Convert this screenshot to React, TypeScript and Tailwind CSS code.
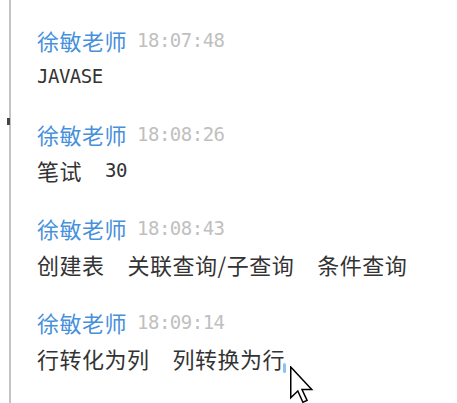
type Part = { text: string; latin?: boolean; gap?: boolean };

type Message = {
  id: number;
  name: string;
  time: string;
  parts: Part[];
};

const messages: Message[] = [
  { id: 1, name: "徐敏老师", time: "18:07:48", parts: [{ text: "JAVASE", latin: true }] },
  {
    id: 2,
    name: "徐敏老师",
    time: "18:08:26",
    parts: [{ text: "笔试" }, { text: "30", latin: true, gap: true }],
  },
  {
    id: 3,
    name: "徐敏老师",
    time: "18:08:43",
    parts: [
      { text: "创建表" },
      { text: "关联查询/子查询", gap: true },
      { text: "条件查询", gap: true },
    ],
  },
  {
    id: 4,
    name: "徐敏老师",
    time: "18:09:14",
    parts: [{ text: "行转化为列" }, { text: "列转换为行", gap: true }],
  },
];

const cjk = { fontFamily: '"Noto Sans CJK SC", "Noto Sans", sans-serif' };
const mono = { fontFamily: '"DejaVu Sans Mono", "Liberation Mono", monospace' };

export default function App() {
  return (
    <div className="relative w-[457px] h-[403px] bg-white overflow-hidden pl-[9px]">
      {/* 左側の縦線 */}
      <div className="h-full border-l-2 border-[#c4c4c4] pl-[26px] pt-[22px]">
        <ul className="flex flex-col gap-[22px]">
          {messages.map((m) => (
            <li key={m.id}>
              <div className="h-[36px] flex items-center">
                <span className="text-[22px] leading-none tracking-[0.5px] text-[#4790dc]" style={cjk}>
                  {m.name}
                </span>
                <span className="ml-[10px] text-[19px] leading-none tracking-[-0.5px] text-[#c0c0c0]" style={mono}>
                  {m.time}
                </span>
              </div>
              <div className="h-[36px] flex items-center text-[#333]">
                {m.parts.map((p, i) => (
                  <span
                    key={i}
                    className={`leading-none ${
                      p.latin ? "text-[19px] tracking-[-0.5px]" : "text-[22px] tracking-[0.5px]"
                    } ${p.gap ? "ml-[23px]" : ""}`}
                    style={p.latin ? mono : cjk}
                  >
                    {p.text}
                  </span>
                ))}
              </div>
            </li>
          ))}
        </ul>
      </div>

      {/* 小さな印 */}
      <div className="absolute left-[7px] top-[118px] w-[3px] h-[7px] bg-[#444]" />

      {/* テキストカーソル */}
      <div className="absolute left-[283px] top-[363px] w-[3px] h-[10px] rounded-full bg-[#8cc2f2]" />

      {/* マウスカーソル */}
      <svg
        className="absolute left-[290px] top-[366px]"
        width="24"
        height="38"
        viewBox="0 0 16 25"
      >
        <path
          d="M0.5 0.5 L0.5 21 L5.2 16.5 L8.6 24 L11.4 22.8 L8 15.5 L14.5 15.5 Z"
          fill="white"
          stroke="black"
          strokeWidth="1"
          strokeLinejoin="miter"
        />
      </svg>
    </div>
  );
}
